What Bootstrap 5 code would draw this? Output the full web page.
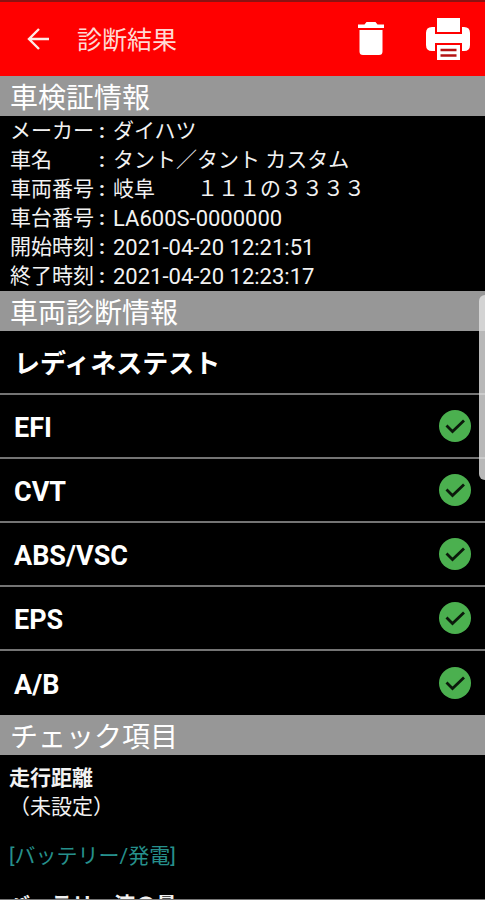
<!DOCTYPE html>
<html lang="ja">
<head>
<meta charset="utf-8">
<meta name="viewport" content="width=device-width, initial-scale=1">
<title>診断結果</title>
<link href="https://cdn.jsdelivr.net/npm/bootstrap@5.3.0/dist/css/bootstrap.min.css" rel="stylesheet">
<style>
  body { font-family: Roboto, "Noto Sans CJK JP", sans-serif; font-size: 21px; line-height: 29px; background: #000; color: #f2f2f2; }
  .app-bar { background: #f00; border-top: 2px solid #8c1212; height: 76px; padding-left: 24px; padding-right: 14px; }
  .app-bar .btn { color: #fff; line-height: 1; }
  .app-title { font-size: 25px; line-height: 32px; padding-top: 4px; color: #ffd9d4; margin-left: 25px; }
  .trash { margin-right: 40px; }
  .band { background: #979797; color: #fff; font-size: 28px; line-height: 34px; padding: 6px 0 0 10px; }
  .info { padding: 1px 10px 0; }
  .info dt { width: 103px; }
  .code { font-size: 22px; }
  .tests .list-group-item { height: 64px; padding: 0 14px; font-size: 27px; line-height: 32px; border: 0 solid #747474; border-bottom-width: 2px; }
  .tests .list-group-item:last-child { border-bottom-width: 0; }
  .tests .kana { font-size: 26px; padding-top: 4px; }
  .tests .latin { padding-top: 4px; }
  .checks { padding: 9px 9px 0; }
  .checks h3 { font-size: 21px; line-height: 29px; }
  .group-name { color: #26908c; margin: 20px 0; }
  .screen-end { border-bottom: 1px solid #777; }
  .thumb { top: 295px; width: 6px; height: 185px; border-radius: 6px 0 0 6px; background: rgba(225, 225, 225, .82); }
</style>
</head>
<body>
<div class="vh-100 d-flex flex-column overflow-hidden position-relative screen-end">
  <header class="app-bar d-flex align-items-center flex-shrink-0">
    <button type="button" class="btn p-0 border-0" aria-label="戻る">
      <svg width="28" height="28" viewBox="0 0 28 28" fill="none" stroke="#ffe9e6" stroke-width="2.4" class="d-block"><path d="M25 14H5M15 4 5 14l10 10"/></svg>
    </button>
    <h1 class="app-title mb-0 fw-normal flex-grow-1">診断結果</h1>
    <button type="button" class="btn trash p-0 border-0" aria-label="削除">
      <svg width="28" height="36" viewBox="0 0 28 36" fill="#fff" class="d-block"><path d="M1 3.500h6.500L9.500 1h9l2 2.500H27V7H1zM2.500 9h23v21.500q0 3.500-3.500 3.500H6q-3.500 0-3.500-3.500z"/></svg>
    </button>
    <button type="button" class="btn p-0 border-0" aria-label="印刷">
      <svg width="46" height="44" viewBox="0 0 46 44" class="d-block"><path fill="#fff" d="M12 1h23v14H12zM1 16q0-6 6-6h3v7h27v-7h2q6 0 6 6v12q0 6-6 6h-2v-8H10v8H7q-6 0-6-6zM12 28h23v15H12z"/><path d="M15.500 33h16M15.500 38.500h16" stroke="#b51313" stroke-width="2.500"/></svg>
    </button>
  </header>

  <main class="flex-grow-1 overflow-hidden">
    <section>
      <h2 class="band mb-0 fw-normal">車検証情報</h2>
      <dl class="info mb-0">
        <div class="d-flex"><dt class="fw-normal d-flex justify-content-between"><span>メーカー</span><span class="pe-2 fw-bold">:</span></dt><dd class="mb-0">ダイハツ</dd></div>
        <div class="d-flex"><dt class="fw-normal d-flex justify-content-between"><span>車名</span><span class="pe-2 fw-bold">:</span></dt><dd class="mb-0">タント／タント カスタム</dd></div>
        <div class="d-flex"><dt class="fw-normal d-flex justify-content-between"><span>車両番号</span><span class="pe-2 fw-bold">:</span></dt><dd class="mb-0">岐阜　　１１１の３３３３</dd></div>
        <div class="d-flex"><dt class="fw-normal d-flex justify-content-between"><span>車台番号</span><span class="pe-2 fw-bold">:</span></dt><dd class="mb-0 code">LA600S-0000000</dd></div>
        <div class="d-flex"><dt class="fw-normal d-flex justify-content-between"><span>開始時刻</span><span class="pe-2 fw-bold">:</span></dt><dd class="mb-0 code">2021-04-20 12:21:51</dd></div>
        <div class="d-flex"><dt class="fw-normal d-flex justify-content-between"><span>終了時刻</span><span class="pe-2 fw-bold">:</span></dt><dd class="mb-0 code">2021-04-20 12:23:17</dd></div>
      </dl>
    </section>

    <section>
      <h2 class="band mb-0 fw-normal">車両診断情報</h2>
      <svg class="d-none"><symbol id="ok" viewBox="0 0 32 32"><circle cx="16" cy="16" r="16" fill="#4bb04f"/><path d="m7.500 15.500 6 6L25 10.500" fill="none" stroke="#0b190b" stroke-width="2.800"/></symbol></svg>
      <ul class="tests list-group list-group-flush fw-bold">
        <li class="list-group-item bg-transparent text-white d-flex align-items-center justify-content-between"><span class="kana">レディネステスト</span></li>
        <li class="list-group-item bg-transparent text-white d-flex align-items-center justify-content-between"><span class="latin">EFI</span><svg width="32" height="32" role="img" aria-label="正常"><use href="#ok"/></svg></li>
        <li class="list-group-item bg-transparent text-white d-flex align-items-center justify-content-between"><span class="latin">CVT</span><svg width="32" height="32" role="img" aria-label="正常"><use href="#ok"/></svg></li>
        <li class="list-group-item bg-transparent text-white d-flex align-items-center justify-content-between"><span class="latin">ABS/VSC</span><svg width="32" height="32" role="img" aria-label="正常"><use href="#ok"/></svg></li>
        <li class="list-group-item bg-transparent text-white d-flex align-items-center justify-content-between"><span class="latin">EPS</span><svg width="32" height="32" role="img" aria-label="正常"><use href="#ok"/></svg></li>
        <li class="list-group-item bg-transparent text-white d-flex align-items-center justify-content-between"><span class="latin">A/B</span><svg width="32" height="32" role="img" aria-label="正常"><use href="#ok"/></svg></li>
      </ul>
    </section>

    <section>
      <h2 class="band mb-0 fw-normal">チェック項目</h2>
      <div class="checks">
        <h3 class="mb-0 fw-bold">走行距離</h3>
        <p class="mb-0">（未設定）</p>
        <p class="group-name">[バッテリー/発電]</p>
        <h3 class="mb-0 fw-bold">バッテリー液の量</h3>
      </div>
    </section>
  </main>
  <div class="thumb position-absolute end-0"></div>
</div>
<script src="https://cdn.jsdelivr.net/npm/bootstrap@5.3.0/dist/js/bootstrap.bundle.min.js"></script>
</body>
</html>
